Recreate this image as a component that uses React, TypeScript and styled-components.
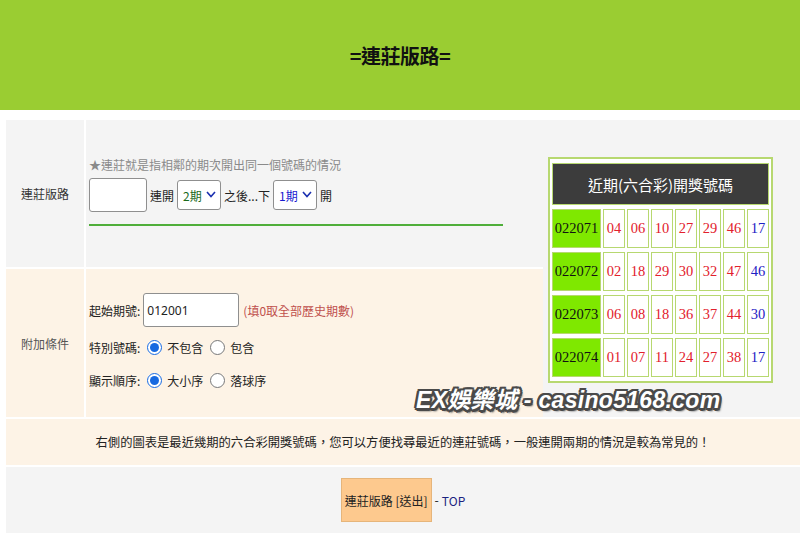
import React from "react";
import styled, { createGlobalStyle } from "styled-components";

const GlobalStyle = createGlobalStyle`
  html, body {
    margin: 0;
    padding: 0;
    background: #ffffff;
  }
  body {
    font-family: "Noto Sans CJK TC", "Noto Sans", sans-serif;
    color: #222;
  }
`;

const Header = styled.header`
  height: 110px;
  background: #9acd32;
  display: flex;
  align-items: center;
  justify-content: center;
`;

const Title = styled.h1`
  margin: 0;
  font-size: 20px;
  font-weight: 700;
  color: #111;
  letter-spacing: -0.5px;
`;

const Board = styled.div`
  position: relative;
  margin: 10px 0 0 6px;
  display: grid;
  grid-template-columns: 80px 457px 1fr;
  grid-template-rows: 147px 148px 46px 66px;
  row-gap: 2px;
  background: #ffffff;
`;

const LabelCell = styled.div<{ $tone: "gray" | "peach" }>`
  background: ${(p) => (p.$tone === "gray" ? "#f4f4f4" : "#fdf3e6")};
  border-right: 2px solid #ffffff;
  display: flex;
  align-items: center;
  justify-content: center;
  font-size: 12px;
  color: ${(p) => (p.$tone === "gray" ? "#333" : "#555")};
`;

const ContentCell = styled.div<{ $tone: "gray" | "peach"; $top: number }>`
  background: ${(p) => (p.$tone === "gray" ? "#f4f4f4" : "#fdf3e6")};
  padding: ${(p) => p.$top}px 0 0 3px;
  display: flex;
  flex-direction: column;
`;

const Note = styled.div`
  font-size: 12px;
  line-height: 16px;
  color: #8a8a8a;
`;

const Line = styled.div<{ $h: number }>`
  display: flex;
  align-items: center;
  height: ${(p) => p.$h}px;
  font-size: 12px;
  gap: 3px;
  color: #222;
`;

const ControlLine = styled(Line)`
  margin-top: 5px;
`;

const FirstLine = styled(Line)`
  margin-bottom: 4px;
`;

const TextInput = styled.input<{ $w: number }>`
  box-sizing: border-box;
  width: ${(p) => p.$w}px;
  height: 34px;
  border: 1px solid #8f8f8f;
  border-radius: 3px;
  background: #fff;
  padding: 0 3px;
  font-family: "Noto Sans", sans-serif;
  font-size: 12px;
  color: #222;
  outline: none;
`;

const SelectWrap = styled.span`
  position: relative;
  display: inline-flex;
`;

const Select = styled.select<{ $color: string }>`
  appearance: none;
  box-sizing: border-box;
  width: 44px;
  height: 30px;
  border: 1px solid #8f8f8f;
  border-radius: 3px;
  background: #fff;
  padding: 0 0 0 5px;
  font-family: "Noto Sans CJK TC", sans-serif;
  font-size: 12px;
  color: ${(p) => p.$color};
  outline: none;
`;

const Chevron = styled.svg`
  position: absolute;
  right: 5px;
  top: 11px;
  pointer-events: none;
`;

const Rule = styled.div`
  margin-top: 12px;
  width: 414px;
  height: 2px;
  background: #4fae3a;
`;

const Hint = styled.span`
  color: #c0504d;
  font-size: 12px;
  margin-left: 1px;
`;

const Radio = styled.input`
  width: 15px;
  height: 15px;
  margin: 0 2px 0 4px;
  accent-color: #1769e0;
`;

const LotteryCell = styled.div`
  grid-row: 1 / span 2;
  grid-column: 3;
  background: #f4f4f4;
  padding: 37px 0 0 5px;
`;

const Lottery = styled.table`
  border: 2px solid #b7d870;
  border-spacing: 2px 4px;
  background: #fff;
  font-family: "Liberation Serif", "Noto Sans CJK TC", serif;
`;

const LotteryHead = styled.th`
  height: 40px;
  background: #3c3c3c;
  border: 1px solid #b7d870;
  color: #fff;
  font-family: "Noto Sans CJK TC", sans-serif;
  font-weight: 400;
  font-size: 15px;
  padding: 0;
`;

const Period = styled.td`
  width: 47px;
  height: 37px;
  background: #7fe800;
  border: 1px solid #b7d870;
  text-align: center;
  font-size: 14.5px;
  color: #111;
  padding: 0;
`;

const Ball = styled.td<{ $special?: boolean }>`
  width: 20px;
  height: 37px;
  background: #fff;
  border: 1px solid #b7d870;
  text-align: center;
  font-size: 14.5px;
  padding: 0;
  color: ${(p) => (p.$special ? "#1f22c4" : "#e2202c")};
`;

const Watermark = styled.div`
  position: absolute;
  left: 410px;
  top: 265px;
  font-family: "Liberation Sans", "Noto Sans CJK TC", sans-serif;
  font-size: 23px;
  font-weight: 700;
  font-style: italic;
  line-height: 30px;
  color: #fff;
  letter-spacing: 0.3px;
  text-shadow:
    2.5px 0 0 #4a4a4a, -2.5px 0 0 #4a4a4a, 0 2.5px 0 #4a4a4a, 0 -2.5px 0 #4a4a4a,
    1.8px 1.8px 0 #4a4a4a, -1.8px -1.8px 0 #4a4a4a, 1.8px -1.8px 0 #4a4a4a,
    -1.8px 1.8px 0 #4a4a4a, 2px 3px 2px #333;
  pointer-events: none;
  white-space: nowrap;
`;

const WideRow = styled.div<{ $tone: "gray" | "peach" }>`
  grid-column: 1 / -1;
  background: ${(p) => (p.$tone === "gray" ? "#f4f4f4" : "#fdf3e6")};
  display: flex;
  align-items: center;
  justify-content: center;
  font-size: 12.3px;
  color: #222;
  gap: 3px;
`;

const Submit = styled.button`
  height: 44px;
  padding: 0 3px;
  background: #fdc98e;
  border: 1px solid #e6b57a;
  font-family: "Noto Sans CJK TC", sans-serif;
  font-size: 12px;
  color: #222;
  cursor: pointer;
`;

const TopLink = styled.a`
  color: #1a2380;
  text-decoration: none;
  font-size: 12px;
`;

const draws: [string, string[]][] = [
  ["022071", ["04", "06", "10", "27", "29", "46", "17"]],
  ["022072", ["02", "18", "29", "30", "32", "47", "46"]],
  ["022073", ["06", "08", "18", "36", "37", "44", "30"]],
  ["022074", ["01", "07", "11", "24", "27", "38", "17"]],
];

function PeriodSelect({ value, color }: { value: string; color: string }) {
  return (
    <SelectWrap>
      <Select $color={color} defaultValue={value}>
        <option value="1">1期</option>
        <option value="2">2期</option>
        <option value="3">3期</option>
      </Select>
      <Chevron width="10" height="7" viewBox="0 0 10 7">
        <path d="M1 1 L5 5.5 L9 1" fill="none" stroke="#1a2fb0" strokeWidth="1.6" />
      </Chevron>
    </SelectWrap>
  );
}

export default function App() {
  return (
    <>
      <GlobalStyle />
      <Header>
        <Title>=連莊版路=</Title>
      </Header>
      <Board>
        <LabelCell $tone="gray">連莊版路</LabelCell>
        <ContentCell $tone="gray" $top={37}>
          <Note>★連莊就是指相鄰的期次開出同一個號碼的情況</Note>
          <ControlLine $h={34}>
            <TextInput $w={58} type="text" />
            <span>連開</span>
            <PeriodSelect value="2" color="#1b6b1b" />
            <span>之後...下</span>
            <PeriodSelect value="1" color="#1a1ad0" />
            <span>開</span>
          </ControlLine>
          <Rule />
        </ContentCell>
        <LotteryCell>
          <Lottery>
            <thead>
              <tr>
                <LotteryHead colSpan={8}>近期(六合彩)開獎號碼</LotteryHead>
              </tr>
            </thead>
            <tbody>
              {draws.map(([period, balls]) => (
                <tr key={period}>
                  <Period>{period}</Period>
                  {balls.map((b, i) => (
                    <Ball key={i} $special={i === 6}>
                      {b}
                    </Ball>
                  ))}
                </tr>
              ))}
            </tbody>
          </Lottery>
        </LotteryCell>
        <LabelCell $tone="peach">附加條件</LabelCell>
        <ContentCell $tone="peach" $top={24}>
          <FirstLine $h={34}>
            <span>起始期號:</span>
            <TextInput $w={96} type="text" defaultValue="012001" />
            <Hint>(填0取全部歷史期數)</Hint>
          </FirstLine>
          <Line $h={33}>
            <span>特別號碼:</span>
            <Radio type="radio" name="special" defaultChecked />
            <span>不包含</span>
            <Radio type="radio" name="special" />
            <span>包含</span>
          </Line>
          <Line $h={33}>
            <span>顯示順序:</span>
            <Radio type="radio" name="order" defaultChecked />
            <span>大小序</span>
            <Radio type="radio" name="order" />
            <span>落球序</span>
          </Line>
        </ContentCell>
        <WideRow $tone="peach">
          右側的圖表是最近幾期的六合彩開獎號碼，您可以方便找尋最近的連莊號碼，一般連開兩期的情況是較為常見的！
        </WideRow>
        <WideRow $tone="gray">
          <Submit type="button">連莊版路 [送出]</Submit>
          <span>-</span>
          <TopLink href="#top">TOP</TopLink>
        </WideRow>
        <Watermark>EX娛樂城 - casino5168.com</Watermark>
      </Board>
    </>
  );
}
